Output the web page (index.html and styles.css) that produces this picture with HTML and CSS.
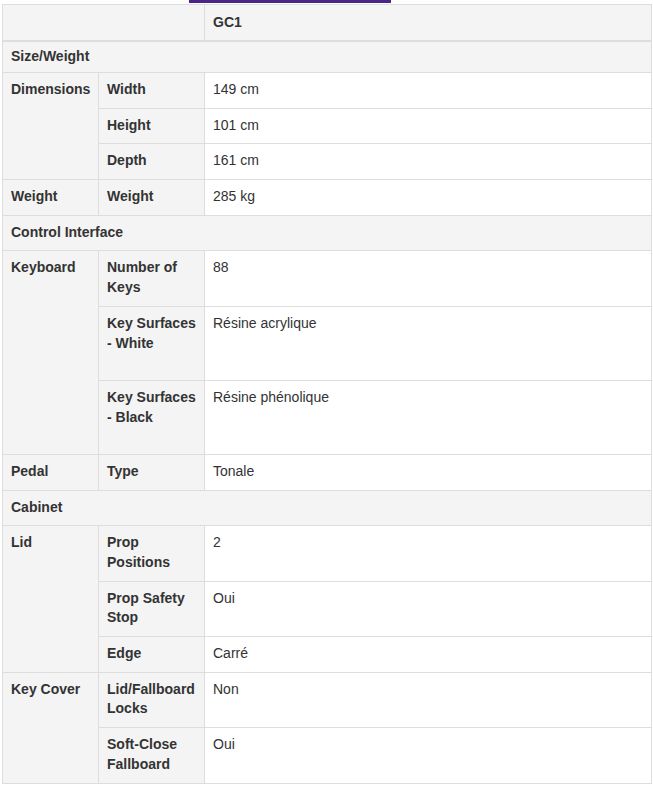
FILE: index.html
```html
<!DOCTYPE html>
<html lang="fr">
<head>
<meta charset="utf-8">
<title>GC1 Specifications</title>
<link rel="stylesheet" href="styles.css">
</head>
<body>
<div class="tab-indicator"></div>
<table class="spec">
  <colgroup>
    <col class="c1"><col class="c2"><col class="c3">
  </colgroup>
  <thead>
    <tr><th colspan="2"></th><th>GC1</th></tr>
  </thead>
  <tbody>
    <tr class="section first"><th colspan="3">Size/Weight</th></tr>
    <tr><th rowspan="3">Dimensions</th><th class="sub">Width</th><td>149 cm</td></tr>
    <tr><th class="sub">Height</th><td>101 cm</td></tr>
    <tr><th class="sub">Depth</th><td>161 cm</td></tr>
    <tr><th>Weight</th><th class="sub">Weight</th><td>285 kg</td></tr>
    <tr class="section"><th colspan="3">Control Interface</th></tr>
    <tr><th rowspan="3">Keyboard</th><th class="sub">Number of Keys</th><td>88</td></tr>
    <tr class="tall"><th class="sub">Key Surfaces - White</th><td class="extra">Résine acrylique</td></tr>
    <tr class="tall"><th class="sub">Key Surfaces - Black</th><td class="extra">Résine phénolique</td></tr>
    <tr><th>Pedal</th><th class="sub">Type</th><td>Tonale</td></tr>
    <tr class="section"><th colspan="3">Cabinet</th></tr>
    <tr><th rowspan="3">Lid</th><th class="sub">Prop Positions</th><td>2</td></tr>
    <tr><th class="sub">Prop Safety Stop</th><td>Oui</td></tr>
    <tr><th class="sub">Edge</th><td>Carré</td></tr>
    <tr><th rowspan="2">Key Cover</th><th class="sub">Lid/Fallboard Locks</th><td>Non</td></tr>
    <tr><th class="sub">Soft-Close Fallboard</th><td>Oui</td></tr>
  </tbody>
</table>
</body>
</html>
```

FILE: styles.css
```css
html, body {
  margin: 0;
  padding: 0;
  background: #ffffff;
}
body {
  font-family: "Liberation Sans", Arial, sans-serif;
  font-size: 14px;
  color: #333333;
}
.tab-indicator {
  width: 202px;
  height: 3px;
  margin-left: 189px;
  margin-bottom: 1px;
  background: #4b2487;
}
.spec {
  width: 650px;
  margin-left: 2px;
  border-collapse: collapse;
  table-layout: fixed;
  line-height: 19.7px;
}
.spec .c1 { width: 96px; }
.spec .c2 { width: 106px; }
.spec th, .spec td {
  border: 1px solid #dddddd;
  padding: 7px 8px 8px 8px;
  text-align: left;
  vertical-align: top;
}
.spec tr.tall {
  height: 74px;
}
.spec td.extra {
  padding-bottom: 26px;
}
.spec th {
  background: #f4f4f4;
  font-weight: bold;
  color: #333333;
}
.spec th.sub {
  padding-right: 3px;
}
.spec td {
  background: #ffffff;
  color: #333333;
}
.spec thead th {
  border-bottom: 2px solid #dddddd;
  padding-top: 8px;
  padding-bottom: 7px;
}
.spec tr.section th {
  background: #f4f4f4;
}
.spec tr.first th {
  padding-top: 5px;
  padding-bottom: 5.5px;
}
.end-marker {
  display: none;
}
```
